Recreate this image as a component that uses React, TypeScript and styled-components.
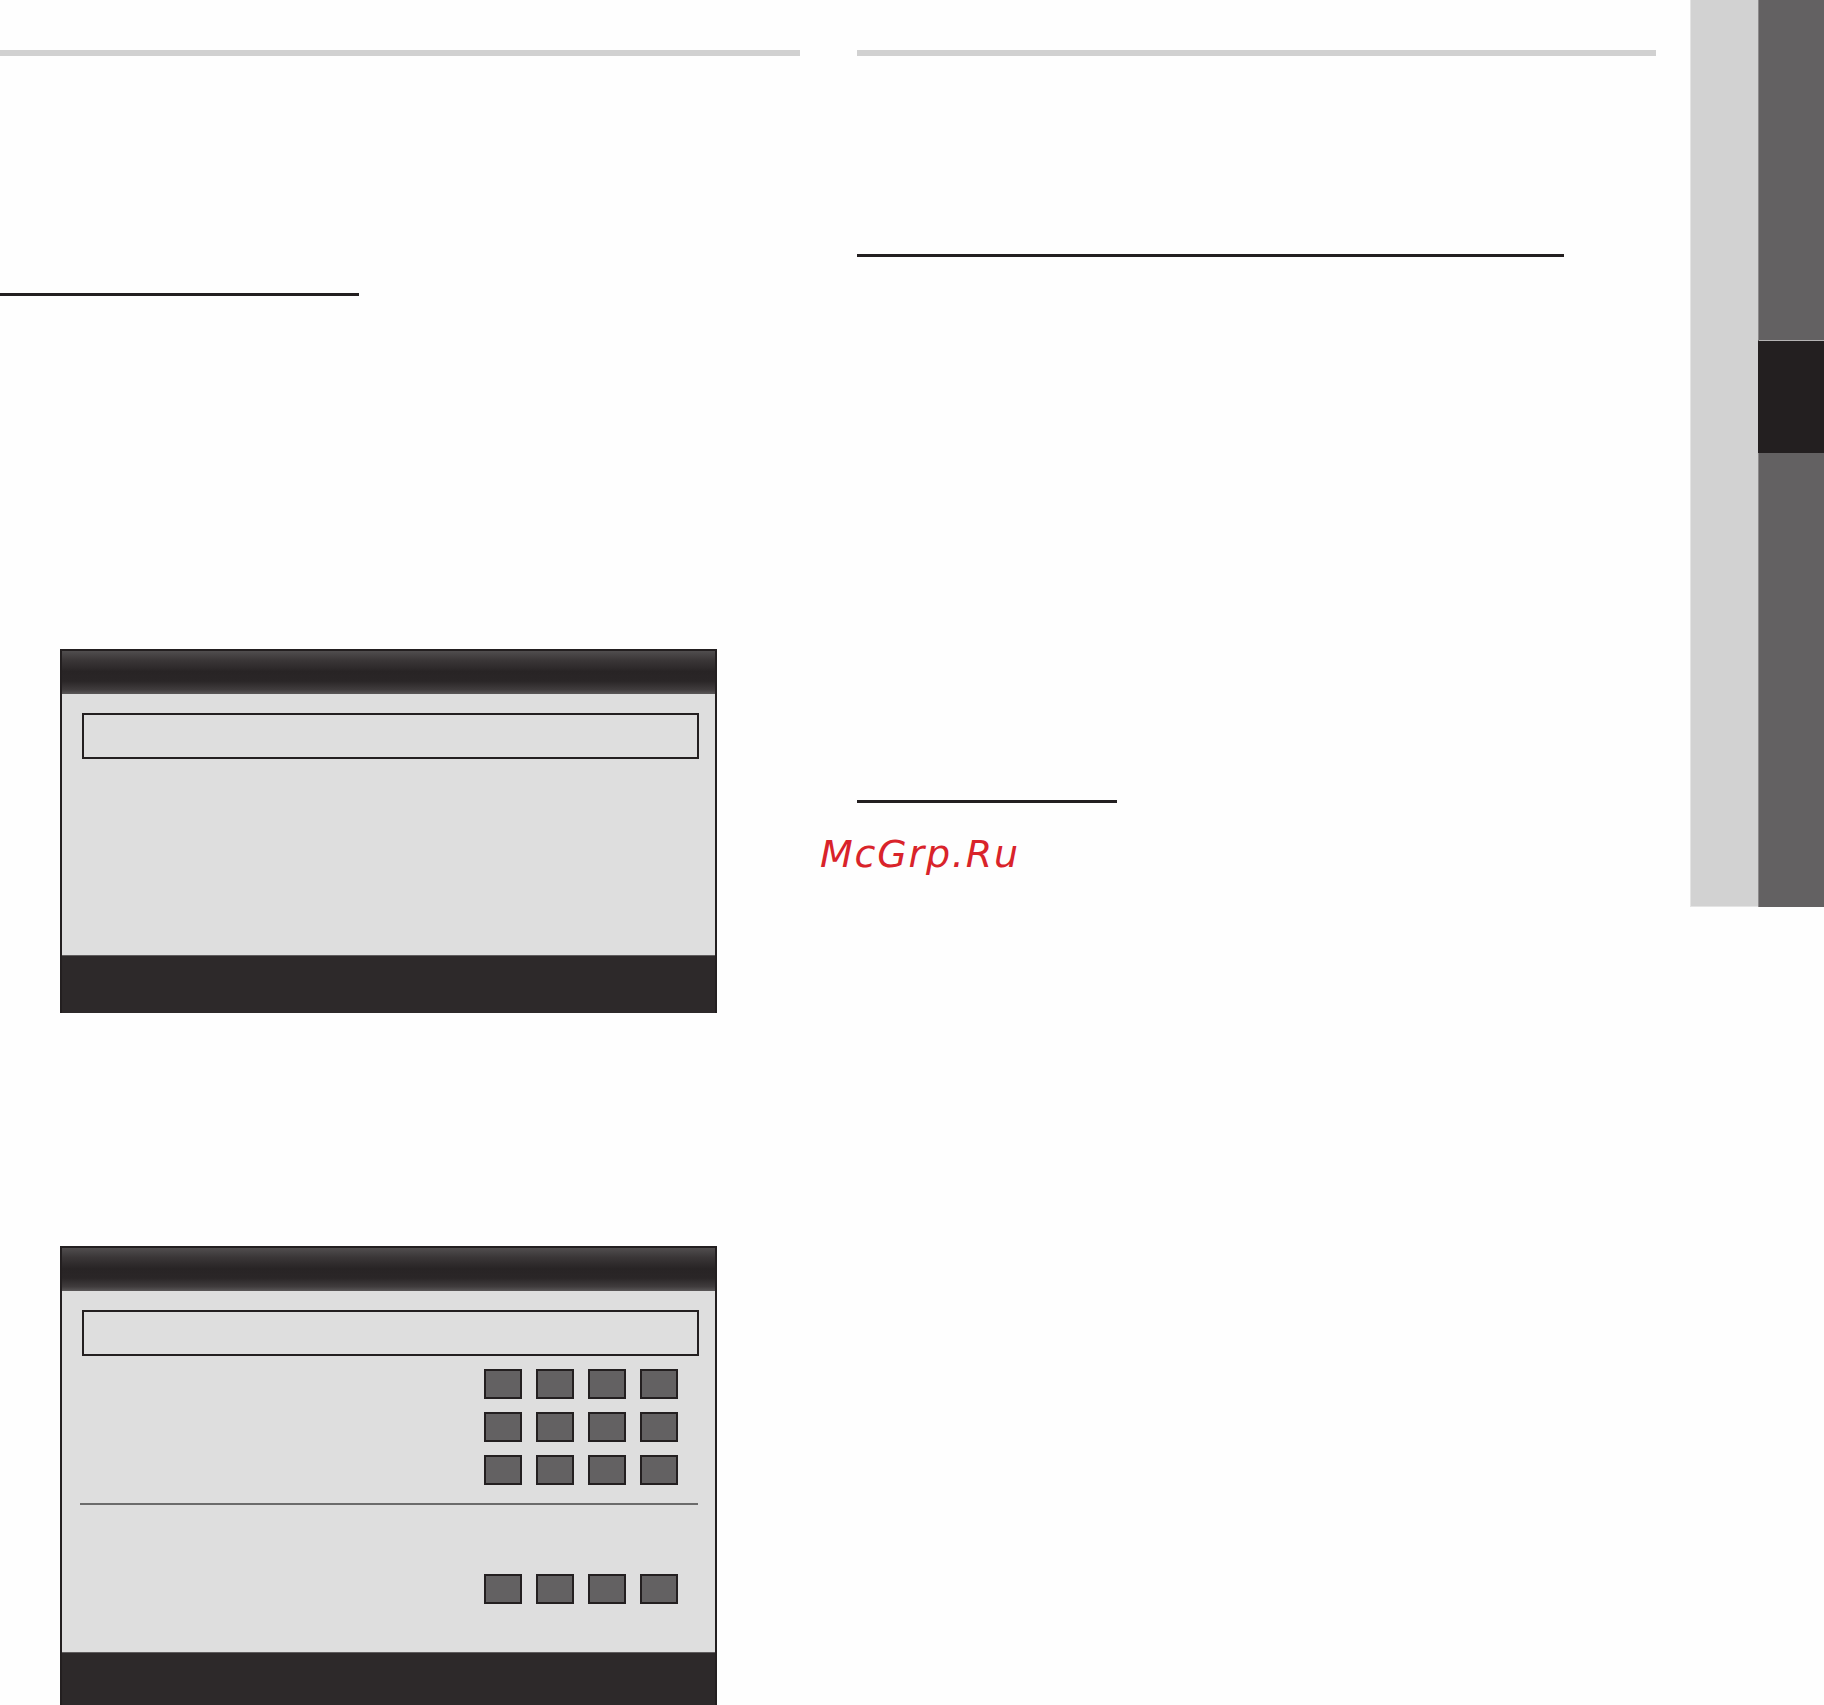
import styled, { createGlobalStyle } from "styled-components";

const GlobalStyle = createGlobalStyle`
  html, body {
    margin: 0;
    padding: 0;
    background: #ffffff;
    font-family: "DejaVu Sans", "Liberation Sans", sans-serif;
  }
  #root {
    height: 1705px;
    overflow: hidden;
  }
`;

const Page = styled.div`
  position: relative;
  display: flex;
  align-items: flex-start;
  width: 1824px;
  height: 1705px;
  overflow: hidden;
  background: #fefefe;
`;

const Column = styled.div<{ $width: number; $gapRight: number }>`
  display: flex;
  flex-direction: column;
  width: ${(p) => p.$width}px;
  margin-right: ${(p) => p.$gapRight}px;
  padding-top: 50px;
  flex-shrink: 0;
`;

const GrayRule = styled.div`
  height: 6px;
  background: #d1d1d1;
`;

const TitleRule = styled.div<{ $top: number; $width: number; $thick?: number }>`
  margin-top: ${(p) => p.$top}px;
  width: ${(p) => p.$width}px;
  height: ${(p) => p.$thick ?? 3}px;
  background: #231f20;
`;

const Panel = styled.div<{ $top: number }>`
  margin-top: ${(p) => p.$top}px;
  margin-left: 60px;
  width: 657px;
  border: 2px solid #231f20;
  border-bottom: none;
  box-sizing: border-box;
  display: flex;
  flex-direction: column;
  background: #dedede;
`;

const PanelHeader = styled.div`
  height: 43px;
  background: linear-gradient(
    to bottom,
    #504d4e 0%,
    #3a3637 22%,
    #282425 48%,
    #2a2627 70%,
    #403c3d 90%,
    #5a5758 100%
  );
`;

const PanelBody = styled.div<{ $height: number }>`
  height: ${(p) => p.$height}px;
  box-sizing: border-box;
  padding: 19px 16px 0 20px;
  display: flex;
  flex-direction: column;
  background: #dedede;
`;

const SelectBox = styled.div`
  height: 46px;
  box-sizing: border-box;
  border: 2.5px solid #231f20;
`;

const KeyRow = styled.div<{ $top: number }>`
  display: flex;
  justify-content: flex-end;
  gap: 14px;
  margin-top: ${(p) => p.$top}px;
  padding-right: 21px;
`;

const Key = styled.div`
  width: 38px;
  height: 30px;
  box-sizing: border-box;
  border: 2px solid #231f20;
  background: #636162;
`;

const Divider = styled.div`
  margin: 18px 1px 0 -2px;
  height: 2px;
  background: #6b6b6b;
`;

const PanelFooter = styled.div`
  height: 57px;
  background: #2d292a;
  border-top: 1px solid #5f5c5d;
`;

const Sidebar = styled.div`
  display: flex;
  width: 134px;
  height: 907px;
  flex-shrink: 0;
`;

const LightStrip = styled.div`
  width: 68px;
  background: #d2d2d2;
  border-left: 1px solid #e4e4e4;
  border-bottom: 1px solid #e4e4e4;
  box-sizing: border-box;
`;

const DarkStrip = styled.div`
  width: 66px;
  display: flex;
  flex-direction: column;
`;

const Tab = styled.div<{ $height: number; $active?: boolean }>`
  height: ${(p) => p.$height}px;
  box-sizing: border-box;
  background: ${(p) => (p.$active ? "#231f20" : "#636162")};
  border-left: 1px solid ${(p) => (p.$active ? "#231f20" : "#8c8a8b")};
  border-top: ${(p) => (p.$active ? "1px solid #b5b3b4" : "none")};
`;

const Watermark = styled.div`
  position: absolute;
  left: 820px;
  top: 832px;
  font-family: "DejaVu Sans", sans-serif;
  font-style: italic;
  font-size: 38px;
  letter-spacing: 1.8px;
  color: #d9232a;
`;

function KeyGroup({ top }: { top: number }) {
  return (
    <KeyRow $top={top}>
      <Key />
      <Key />
      <Key />
      <Key />
    </KeyRow>
  );
}

export default function App() {
  return (
    <>
      <GlobalStyle />
      <Page>
        <Column $width={800} $gapRight={57}>
          <GrayRule />
          <TitleRule $top={237} $width={359} />
          <Panel $top={353}>
            <PanelHeader />
            <PanelBody $height={261}>
              <SelectBox />
            </PanelBody>
            <PanelFooter />
          </Panel>
          <Panel $top={233}>
            <PanelHeader />
            <PanelBody $height={361}>
              <SelectBox />
              <KeyGroup top={13} />
              <KeyGroup top={13} />
              <KeyGroup top={13} />
              <Divider />
              <KeyGroup top={69} />
            </PanelBody>
            <PanelFooter />
          </Panel>
        </Column>
        <Column $width={799} $gapRight={34}>
          <GrayRule />
          <TitleRule $top={198} $width={707} />
          <TitleRule $top={543} $width={260} />
        </Column>
        <Sidebar>
          <LightStrip />
          <DarkStrip>
            <Tab $height={340} />
            <Tab $height={113} $active />
            <Tab $height={454} />
          </DarkStrip>
        </Sidebar>
        <Watermark>McGrp.Ru</Watermark>
      </Page>
    </>
  );
}
